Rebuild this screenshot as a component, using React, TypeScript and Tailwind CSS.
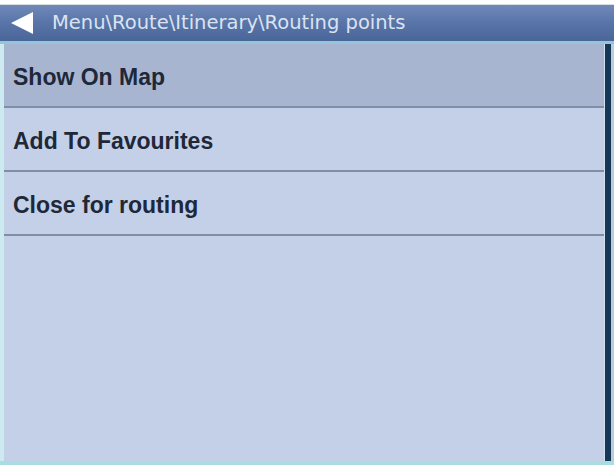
import React from "react";

const items = ["Show On Map", "Add To Favourites", "Close for routing"];

export default function App() {
  return (
    <div className="w-[614px] h-[465px] flex flex-col bg-white overflow-hidden">
      <div className="h-[5px] bg-white border-b border-[#d8dde4]" />
      <div className="h-[36px] flex items-center bg-gradient-to-b from-[#7089b9] via-[#5874a8] to-[#4a6699]">
        <svg width="24" height="24" viewBox="0 0 24 24" className="ml-[10px]">
          <polygon points="1,12 23,1 23,23" fill="#ffffff" />
        </svg>
        <span
          className="ml-[18px] text-[19.5px] text-[#dbe3f0] leading-none"
          style={{ fontFamily: '"DejaVu Sans", sans-serif' }}
        >
          Menu\Route\Itinerary\Routing points
        </span>
      </div>
      <div className="h-[3px] bg-[#93c6d9]" />
      <div className="flex-1 flex">
        <div className="w-[4px] bg-[#cdeaf0]" />
        <div className="flex-1 flex flex-col bg-[#c3d0e8] border-r border-[#d4dff0]">
          {items.map((t, i) => (
            <div
              key={t}
              className={`h-[64px] flex items-center pl-[9px] pt-[4px] border-b-2 border-[#7e8faa] ${
                i === 0 ? "bg-[#a7b5d1]" : "bg-[#c3d0e8]"
              }`}
            >
              <span
                className="text-[23px] font-bold text-[#1e2838] leading-none"
                style={{ fontFamily: '"Liberation Sans", Arial, sans-serif' }}
              >
                {t}
              </span>
            </div>
          ))}
        </div>
        <div className="w-[6px] bg-[#163755]" />
        <div className="w-[3px] bg-[#b9cde0]" />
      </div>
      <div className="h-[4px] bg-[#a9dde2]" />
    </div>
  );
}
